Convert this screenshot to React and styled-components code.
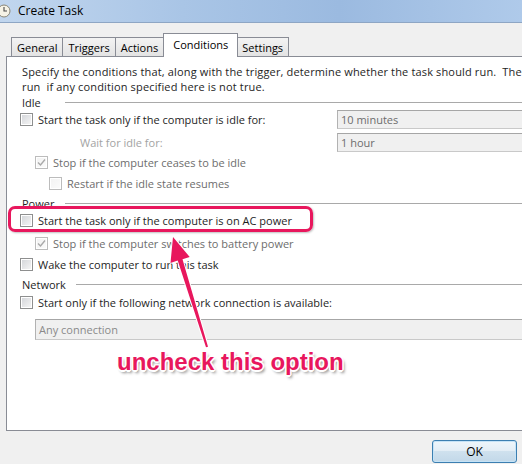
import React from "react";
import styled, { createGlobalStyle } from "styled-components";

const GlobalStyle = createGlobalStyle`
  html, body {
    margin: 0;
    padding: 0;
    overflow: hidden;
  }
  body {
    background: #f0f0f0;
    font-family: "Open Sans", "Noto Sans", sans-serif;
    font-size: 11px;
    color: #1e1e1e;
  }
`;

const Window = styled.div`
  position: relative;
  width: 522px;
  height: 464px;
  display: flex;
  flex-direction: column;
  overflow: hidden;
`;

const TitleBar = styled.div`
  height: 21px;
  display: flex;
  align-items: center;
  gap: 7px;
  padding-bottom: 1px;
  border-bottom: 1px solid #8ea6c4;
  background: linear-gradient(to right, #c1d6ee 0%, #a9c5e6 35%, #9bbae0 65%, #afcaea 100%);
  font-size: 12px;
  color: #000;
`;

const ClockIcon = styled.svg`
  margin-left: -3px;
  flex: none;
`;

const Body = styled.div`
  flex: 1;
  display: flex;
  flex-direction: column;
  padding: 11px 0 0 6px;
`;

const TabRow = styled.div`
  display: flex;
  align-items: flex-end;
  height: 23px;
  padding-left: 5px;
  position: relative;
  z-index: 1;
  margin-bottom: -1px;
`;

const Tab = styled.div`
  box-sizing: border-box;
  height: ${p => (p.$active ? 24 : 20)}px;
  padding: 0 ${p => (p.$active ? 9 : 5)}px ${p => (p.$active ? 3 : 0)}px;
  display: flex;
  align-items: center;
  border: 1px solid #898c95;
  border-bottom: ${p => (p.$active ? "none" : "1px solid #898c95")};
  margin-left: -1px;
  margin-right: ${p => (p.$active ? -1 : 0)}px;
  background: ${p => (p.$active ? "#ffffff" : "linear-gradient(#f3f3f3, #e3e3e3)")};
  position: relative;
  z-index: ${p => (p.$active ? 2 : 1)};
  font-size: 11px;
  color: #000;
  &:first-child {
    margin-left: 0;
  }
`;

const Panel = styled.div`
  box-sizing: border-box;
  height: 375px;
  margin-right: -40px;
  border: 1px solid #898c95;
  background: #fff;
  padding: 7px 0 0 13px;
  overflow: hidden;
`;

const Intro = styled.div`
  padding-left: 2px;
  line-height: 15px;
  letter-spacing: 0.15px;
  white-space: pre;
`;

const GroupHeader = styled.div`
  display: flex;
  align-items: center;
  gap: 10px;
  height: 16px;
  padding-left: 2px;
  margin-top: ${p => p.$mt || 0}px;
`;

const GroupLabel = styled.span`
  min-width: 33px;
`;

const GroupLine = styled.div`
  flex: 1;
  height: 1px;
  background: #a9a9a9;
`;

const Row = styled.div`
  display: flex;
  align-items: center;
  height: 18px;
  margin-top: ${p => p.$mt || 0}px;
  padding-left: ${p => p.$indent || 0}px;
`;

const FieldRow = styled.div`
  display: grid;
  grid-template-columns: 317px 1fr;
  align-items: center;
  height: 18px;
  margin-top: ${p => p.$mt || 0}px;
  margin-right: 14px;
`;

const Option = styled.label`
  display: flex;
  align-items: center;
  gap: 5px;
  padding-left: ${p => p.$indent || 0}px;
  color: ${p => (p.$disabled ? "#6d6d6d" : "#1e1e1e")};
  white-space: nowrap;
`;

const Box = styled.span`
  box-sizing: border-box;
  width: 13px;
  height: 13px;
  flex: none;
  display: flex;
  align-items: center;
  justify-content: center;
  border: 1px solid ${p => (p.$disabled ? "#bcbcbc" : "#8e8f8f")};
  background: ${p =>
    p.$disabled
      ? "linear-gradient(135deg, #f2f2f2, #fbfbfb)"
      : "linear-gradient(135deg, #d2d4d8, #f7f7f7)"};
  box-shadow: inset 0 0 0 1px #fff;
`;

const Muted = styled.span`
  padding-left: 60px;
  color: #a3a3a3;
`;

const Select = styled.div`
  box-sizing: border-box;
  height: ${p => p.$h || 19}px;
  display: flex;
  align-items: center;
  padding-left: 3px;
  margin-left: ${p => p.$indent || 0}px;
  border: 1px solid #c9c9c9;
  border-top-color: #a6a6a6;
  border-left-color: #b2b2b2;
  background: #f0f0f0;
  color: ${p => p.$color || "#6d6d6d"};
  white-space: nowrap;
`;

const WideSelectRow = styled.div`
  margin-top: 8px;
  margin-right: 14px;
`;

const Footer = styled.div`
  display: flex;
  justify-content: flex-end;
  padding: 9px 5px 0 0;
`;

const Button = styled.button`
  box-sizing: border-box;
  width: 85px;
  height: 23px;
  border: 1px solid #3c7fb1;
  border-radius: 3px;
  background: linear-gradient(#eef6fb 0%, #e4eef6 45%, #cfe1ee 50%, #c2d8e9 100%);
  box-shadow: inset 0 0 0 1px #c5e3f7;
  font-family: "Open Sans", "Noto Sans", sans-serif;
  font-size: 12px;
  color: #000;
  padding: 0;
`;

const Highlight = styled.div`
  position: absolute;
  left: 8px;
  top: 206px;
  width: 305px;
  height: 26px;
  box-sizing: border-box;
  border: 3px solid #e8175d;
  border-radius: 7px;
  box-shadow: 1px 1px 2px rgba(0, 0, 0, 0.25);
  pointer-events: none;
`;

const Arrow = styled.svg`
  position: absolute;
  left: 155px;
  top: 232px;
  pointer-events: none;
  overflow: visible;
`;

const Callout = styled.div`
  position: absolute;
  left: 117px;
  top: 348px;
  font-family: "Liberation Sans", Arial, sans-serif;
  font-weight: bold;
  font-size: 24px;
  line-height: 28px;
  color: #e8175d;
  white-space: nowrap;
  text-shadow:
    -1px -1px 0 #fff, 1px -1px 0 #fff, -1px 1px 0 #fff, 1px 1px 0 #fff,
    0 -1.5px 0 #fff, 0 1.5px 0 #fff, -1.5px 0 0 #fff, 1.5px 0 0 #fff,
    2px 3px 3px rgba(0, 0, 0, 0.45);
`;

const Check = ({ checked, disabled }) => (
  <Box $disabled={disabled}>
    {checked && (
      <svg width="9" height="9" viewBox="0 0 9 9">
        <path d="M1 4.5 L3.5 7 L8 1.5" fill="none" stroke={disabled ? "#a9a9a9" : "#333"} strokeWidth="1.4" />
      </svg>
    )}
  </Box>
);

const CheckOption = ({ indent, checked, disabled, children }) => (
  <Option $indent={indent} $disabled={disabled}>
    <Check checked={checked} disabled={disabled} />
    {children}
  </Option>
);

const tabs = ["General", "Triggers", "Actions", "Conditions", "Settings"];

export default function App() {
  return (
    <Window>
      <GlobalStyle />
      <TitleBar>
        <ClockIcon width="14" height="14" viewBox="0 0 14 14">
          <circle cx="7" cy="7" r="6" fill="#f6f3e6" stroke="#8a8676" strokeWidth="1" />
          <path d="M7 3 V7 H10" fill="none" stroke="#4a4a4a" strokeWidth="1.1" />
        </ClockIcon>
        Create Task
      </TitleBar>
      <Body>
        <TabRow>
          {tabs.map(t => (
            <Tab key={t} $active={t === "Conditions"}>
              {t}
            </Tab>
          ))}
        </TabRow>
        <Panel>
          <Intro>
            {"Specify the conditions that, along with the trigger, determine whether the task should run.  The\nrun  if any condition specified here is not true."}
          </Intro>
          <GroupHeader>
            <GroupLabel>Idle</GroupLabel>
            <GroupLine />
          </GroupHeader>
          <FieldRow>
            <CheckOption>Start the task only if the computer is idle for:</CheckOption>
            <Select>10 minutes</Select>
          </FieldRow>
          <FieldRow $mt={5}>
            <Muted>Wait for idle for:</Muted>
            <Select>1 hour</Select>
          </FieldRow>
          <Row $mt={2}>
            <CheckOption indent={15} checked disabled>
              Stop if the computer ceases to be idle
            </CheckOption>
          </Row>
          <Row $mt={3}>
            <CheckOption indent={29} disabled>
              Restart if the idle state resumes
            </CheckOption>
          </Row>
          <GroupHeader $mt={3}>
            <GroupLabel>Power</GroupLabel>
            <GroupLine />
          </GroupHeader>
          <Row>
            <CheckOption>Start the task only if the computer is on AC power</CheckOption>
          </Row>
          <Row $mt={5}>
            <CheckOption indent={15} checked disabled>
              Stop if the computer switches to battery power
            </CheckOption>
          </Row>
          <Row $mt={3}>
            <CheckOption>Wake the computer to run this task</CheckOption>
          </Row>
          <GroupHeader $mt={3}>
            <GroupLabel>Network</GroupLabel>
            <GroupLine />
          </GroupHeader>
          <Row $mt={1}>
            <CheckOption>Start only if the following network connection is available:</CheckOption>
          </Row>
          <WideSelectRow>
            <Select $indent={15} $h={21} $color="#8a8a8a">
              Any connection
            </Select>
          </WideSelectRow>
        </Panel>
        <Footer>
          <Button>OK</Button>
        </Footer>
      </Body>

      <Highlight />
      <Arrow width="60" height="120" viewBox="0 0 60 120">
        <polygon
          points="18,5 34.7,25 27.5,27.2 53,114.7 51,115.3 22.7,28.6 15.5,30.9"
          fill="#e8175d"
          stroke="#fff"
          strokeWidth="2"
          strokeLinejoin="round"
          paintOrder="stroke"
        />
      </Arrow>
      <Callout>uncheck this option</Callout>
    </Window>
  );
}
